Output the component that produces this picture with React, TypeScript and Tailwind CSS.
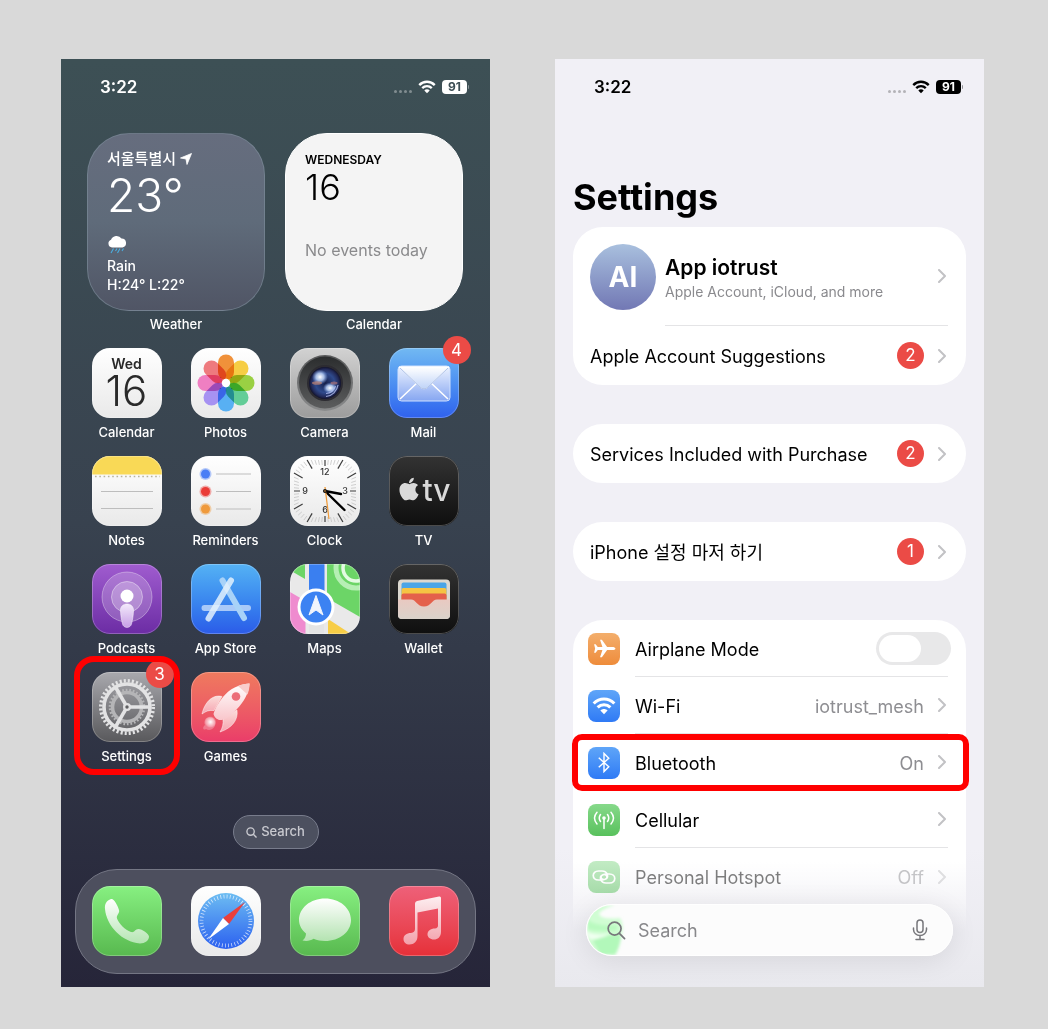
import type { ReactNode } from "react";
import { FaApple } from "react-icons/fa";

const sans = "font-['Inter','Noto_Sans_CJK_KR',sans-serif]";

function WifiGlyph({ className }: { className: string }) {
  return (
    <svg viewBox="0 0 20 15" className={className} fill="none" stroke="currentColor" strokeWidth="2.6">
      <path d="M1.4 5.4C6.2 0.4 13.8 0.4 18.6 5.4" />
      <path d="M4.7 8.7C7.7 5.7 12.3 5.7 15.3 8.7" />
      <path d="M7 11.3C8.7 9.6 11.3 9.6 13 11.3L10 14.4Z" fill="currentColor" stroke="none" />
    </svg>
  );
}

function StatusBar({ dark }: { dark: boolean }) {
  return (
    <div className={`flex h-14 items-center justify-between pr-[21px] pl-[39px] ${dark ? "text-white" : "text-black"}`}>
      <span className="text-[17px] leading-5 font-semibold">3:22</span>
      <div className="flex items-center gap-1.5">
        <div className={`flex gap-0.5 pt-2 ${dark ? "opacity-35" : "opacity-25"}`}>
          {[0, 1, 2, 3].map((i) => (
            <span key={i} className="size-[3px] rounded-full bg-current" />
          ))}
        </div>
        <WifiGlyph className="h-[14px] w-[18px]" />
        <div className="flex items-center gap-px">
          <span
            className={`flex h-[14px] w-[25px] items-center justify-center rounded-[4px] text-[12px] leading-none font-bold ${
              dark ? "bg-white text-[#3d4e55]" : "bg-black text-white"
            }`}
          >
            91
          </span>
          <span className="h-1 w-px rounded-r bg-current opacity-40" />
        </div>
      </div>
    </div>
  );
}

function Badge({ children, className = "" }: { children: ReactNode; className?: string }) {
  return (
    <span
      className={`flex items-center justify-center rounded-full bg-[#eb4b46] text-[17px] leading-none text-white ${className}`}
    >
      {children}
    </span>
  );
}

function Def({ id, from, to }: { id: string; from: string; to: string }) {
  return (
    <linearGradient id={id} x1="0" y1="0" x2="0" y2="1">
      <stop offset="0" stopColor={from} />
      <stop offset="1" stopColor={to} />
    </linearGradient>
  );
}

function Art({ children }: { children: ReactNode }) {
  return (
    <svg viewBox="0 0 70 70" className="size-full" fill="none" aria-hidden="true">
      {children}
    </svg>
  );
}

const petals = ["#f0913a", "#f6cd44", "#9ad043", "#63cd97", "#58b0f3", "#a692f2", "#ef7fc2", "#ee7a7e"];

function PhotosArt() {
  return (
    <Art>
      <g className="isolate">
        {petals.map((c, i) => (
          <rect
            key={c}
            x="27"
            y="6.5"
            width="16"
            height="25.5"
            rx="8"
            fill={c}
            transform={`rotate(${i * 45} 35 35)`}
            className="mix-blend-multiply"
          />
        ))}
      </g>
      <circle cx="35" cy="35" r="4.2" fill="#fff" />
    </Art>
  );
}

function CameraArt() {
  return (
    <Art>
      <defs>
        <Def id="camRing" from="#58595a" to="#8a8b8c" />
        <Def id="camBody" from="#2b2d2e" to="#5c5d5e" />
        <radialGradient id="camLens">
          <stop offset="0" stopColor="#16204a" />
          <stop offset="0.6" stopColor="#2f4a8c" />
          <stop offset="0.85" stopColor="#232c5c" />
          <stop offset="1" stopColor="#12132c" />
        </radialGradient>
        <radialGradient id="camGlare">
          <stop offset="0" stopColor="#fff" />
          <stop offset="0.5" stopColor="#bcd2f6" stopOpacity="0.85" />
          <stop offset="1" stopColor="#7ea2e6" stopOpacity="0" />
        </radialGradient>
      </defs>
      <circle cx="35" cy="35" r="28" fill="url(#camRing)" />
      <circle cx="35" cy="34.5" r="26" fill="url(#camBody)" />
      <circle cx="35" cy="35" r="18" fill="#2c2b31" />
      <circle cx="35" cy="35" r="16" fill="url(#camLens)" />
      <ellipse cx="30" cy="29" rx="8" ry="7.500" fill="url(#camGlare)" />
      <ellipse cx="27" cy="35" rx="5" ry="1.800" fill="#e0916f" opacity="0.6" />
      <ellipse cx="40" cy="40" rx="7" ry="5.500" fill="url(#camGlare)" />
      <ellipse cx="44" cy="35" rx="3.500" ry="1.500" fill="#c07a76" opacity="0.6" />
      <path d="M36 48.500A13.500 13.500 0 0 0 48 37M36 45.500A11 11 0 0 0 45.500 38" stroke="#b5c2f2" strokeWidth="1.200" opacity="0.8" />
    </Art>
  );
}

function MailArt() {
  return (
    <Art>
      <defs>
        <Def id="mailBody" from="#eef4ff" to="#86a6f1" />
        <Def id="mailFlap" from="#ffffff" to="#bfd3f8" />
      </defs>
      <rect x="9" y="18" width="52" height="35" rx="3.5" fill="url(#mailBody)" stroke="#cfe0ff" />
      <path d="M11 51L29 34M59 51L41 34" stroke="#fff" strokeWidth="1.5" />
      <path d="M10 19H60L39 39Q35 42.500 31 39Z" fill="url(#mailFlap)" stroke="#fff" />
      <path d="M11 20L31 39Q35 42.500 39 39L59 20" stroke="#9bb3df" strokeWidth="0.8" />
    </Art>
  );
}

function NotesArt() {
  return (
    <Art>
      <rect width="70" height="18.500" fill="#f9d956" />
      <path d="M3 20.500H68" stroke="#b9b49a" strokeWidth="1.600" strokeDasharray="1.600 2.700" />
      <path d="M9 35.500H61M9 52.500H61" stroke="#bdbdbd" strokeWidth="1.200" />
    </Art>
  );
}

function RemindersArt() {
  return (
    <Art>
      {[
        [18, "#4a7ef5"],
        [35.5, "#ea3b36"],
        [53, "#ef9a3c"],
      ].map(([y, c]) => (
        <g key={c}>
          <circle cx="14.5" cy={y} r="6" fill={c as string} opacity="0.4" />
          <circle cx="14.5" cy={y} r="4.5" fill={c as string} />
          <path d={`M25 ${y}H60`} stroke="#bdbdbd" strokeWidth="1.200" />
        </g>
      ))}
    </Art>
  );
}

function ClockArt() {
  return (
    <Art>
      {Array.from({ length: 60 }, (_, i) => {
        const a = (i * Math.PI) / 30;
        const edge = Math.min(31 / Math.max(Math.abs(Math.sin(a)), Math.abs(Math.cos(a))), 36);
        const len = i % 5 === 0 ? (i % 15 === 0 ? 6 : 10) : 5;
        return (
          <path
            key={i}
            d={`M${35 + edge * Math.sin(a)} ${35 - edge * Math.cos(a)}L${35 + (edge - len) * Math.sin(a)} ${35 - (edge - len) * Math.cos(a)}`}
            stroke={i % 5 === 0 ? "#3c3c3c" : "#c4c4c4"}
            strokeWidth={i % 5 === 0 ? 1.2 : 0.8}
          />
        );
      })}
      <g fill="#333" fontSize="9" textAnchor="middle" fontFamily="Inter, sans-serif" fontWeight="500">
        <text x="35" y="19">12</text>
        <text x="55" y="38">3</text>
        <text x="35" y="57">6</text>
        <text x="15" y="38">9</text>
      </g>
      <path d="M35 35L51 38" stroke="#000" strokeWidth="2.400" strokeLinecap="round" />
      <path d="M35 35L54.500 54" stroke="#000" strokeWidth="2.400" strokeLinecap="round" />
      <path d="M35 31L39 63" stroke="#f09a37" strokeWidth="1.200" />
      <circle cx="35" cy="35" r="2" fill="#111" />
      <circle cx="35" cy="35" r="0.8" fill="#f09a37" />
    </Art>
  );
}

function TvArt() {
  return (
    <div className="flex size-full items-center justify-center text-[#d9d9d9]">
      <FaApple className="mb-1 size-[26px]" />
      <span className="pb-0.5 text-[30px] leading-none font-medium">tv</span>
    </div>
  );
}

function PodcastsArt() {
  return (
    <Art>
      <defs>
        <Def id="podBody" from="#f3e9fb" to="#c79fe6" />
      </defs>
      <circle cx="35" cy="33" r="25" fill="#fff" fillOpacity="0.2" stroke="#fff" strokeOpacity="0.35" />
      <circle cx="35" cy="33" r="15.500" fill="#fff" fillOpacity="0.25" stroke="#fff" strokeOpacity="0.4" />
      <path d="M28.500 46C28.500 38 41.500 38 41.500 46C41.500 51 40.500 56 39.500 60C38.500 64.500 31.500 64.500 30.500 60C29.500 56 28.500 51 28.500 46Z" fill="url(#podBody)" stroke="#fff" strokeOpacity="0.6" strokeWidth="0.8" />
      <circle cx="35" cy="32" r="6.500" fill="#fff" />
    </Art>
  );
}

function AppStoreArt() {
  return (
    <Art>
      <g strokeLinecap="round" strokeWidth="6">
        <path d="M13.500 44H57" stroke="#a9c9f8" />
        <path d="M31.500 16.500L53 54" stroke="#a8d2f8" />
        <path d="M40 16.500L17.500 54.500" stroke="#e3f1fd" strokeOpacity="0.85" />
      </g>
    </Art>
  );
}

function MapsArt() {
  return (
    <Art>
      <defs>
        <clipPath id="mapPark">
          <path d="M37 0H70V53L37 34Z" />
        </clipPath>
      </defs>
      <path d="M10 0H15V15L3 8Z" fill="#6cd567" />
      <rect x="19" width="15.500" height="42" fill="#3a7ff0" />
      <g clipPath="url(#mapPark)">
        <rect width="70" height="70" fill="#6cd567" />
        <circle cx="66" cy="4" r="20" stroke="#b6efb4" strokeWidth="5" />
        <circle cx="66" cy="4" r="13" stroke="#e4fbe3" strokeWidth="3.500" />
      </g>
      <path d="M0 28L15.500 37V70H0Z" fill="#ef8bcf" />
      <path d="M38 55L61 70H38Z" fill="#f7cd46" />
      <rect x="19" y="55" width="15" height="15" fill="#e4e4e4" />
      <circle cx="26" cy="43" r="18.500" fill="#fff" />
      <circle cx="26" cy="43" r="15.500" fill="#3c82f2" />
      <path d="M26 31.500L33 51L26 46L19 51Z" fill="#f0f4fc" stroke="#f0f4fc" strokeLinejoin="round" />
    </Art>
  );
}

function WalletArt() {
  return (
    <Art>
      <defs>
        <Def id="walletPocket" from="#e9c9c1" to="#d9d2ca" />
      </defs>
      <rect x="9" y="15.500" width="52" height="39.500" rx="4" fill="#dcd8cf" />
      <rect x="12.500" y="18.500" width="45" height="20" rx="2" fill="#4aa5e6" />
      <rect x="12.500" y="24" width="45" height="20" rx="2" fill="#f5c443" />
      <rect x="12.500" y="29.500" width="45" height="20" rx="2" fill="#e4604b" />
      <path d="M9 35.500H22C27 35.500 28 42.500 35 42.500S43 35.500 48 35.500H61V51Q61 55 57 55H13Q9 55 9 51Z" fill="url(#walletPocket)" />
    </Art>
  );
}

function SettingsArt() {
  return (
    <Art>
      <circle cx="35" cy="35" r="14.500" stroke="#b5b5b7" strokeWidth="3.600" />
      <circle cx="35" cy="35" r="17" stroke="#b5b5b7" strokeWidth="2.600" strokeDasharray="1.700 1.860" />
      <circle cx="35" cy="35" r="23" stroke="#e3e3e4" strokeWidth="3.600" />
      <circle cx="35" cy="35" r="26.200" stroke="#e3e3e4" strokeWidth="3.600" strokeDasharray="2.100 2.016" />
      <g stroke="#e3e3e4" strokeWidth="3.600">
        <path d="M38 35H57" />
        <path d="M33.500 32.400L24 16" />
        <path d="M33.500 37.600L24 54" />
      </g>
      <circle cx="35" cy="35" r="4" fill="#e3e3e4" />
      <circle cx="35" cy="35" r="1.700" fill="#606063" />
    </Art>
  );
}

function GamesArt() {
  return (
    <Art>
      <defs>
        <Def id="rocket" from="#ffffff" to="#f9c6cb" />
        <Def id="fin" from="#fbdcd9" to="#f6a3b0" />
        <radialGradient id="flame">
          <stop offset="0" stopColor="#fff" />
          <stop offset="1" stopColor="#fff" stopOpacity="0.15" />
        </radialGradient>
      </defs>
      <path d="M31 24.500C21 22 13.500 31 11 42C15 39 18 38 23 38.500Z" fill="url(#fin)" stroke="#fff" strokeOpacity="0.6" strokeWidth="0.800" />
      <path d="M46 38C47.500 48 41 56 29 60C31.500 56 32.500 52 32 47Z" fill="url(#fin)" stroke="#fff" strokeOpacity="0.6" strokeWidth="0.800" />
      <path d="M58.500 11.500C48 12 38.500 17 32 25C27 31 24 36.500 22.500 42C23.500 46 27 48.500 31 48C37 46 42 42 46 37C53 29.500 58 21 58.500 11.500Z" fill="url(#rocket)" />
      <path d="M47 14L56.500 22.500C58 18.500 58.500 15 58.500 11.500C54.500 11.700 50.500 12.500 47 14Z" fill="#f9cdcb" />
      <circle cx="45" cy="24.500" r="4.300" fill="#ec6d78" />
      <path d="M22 46C15 43 12 49 14 53C11 55 12 59 15 57C19 60 26 56 24 49Z" fill="#fff" opacity="0.25" />
      <circle cx="19.500" cy="50" r="5.500" fill="url(#flame)" />
    </Art>
  );
}

function PhoneArt() {
  return (
    <Art>
      <defs>
        <Def id="handset" from="#ffffff" to="#b5e5b3" />
      </defs>
      <path
        d="M19 13C14.500 14.500 12.500 18 13 23C14.500 40 30 56 48 57.500C53 57.500 57 54.500 57 50.500C57 48 50 43 46.500 43C43 43 42.500 47 39 46C33 44 27 37.500 25 32.500C24 29 28 27.500 27 24C26 20 22 12 19 13Z"
        fill="url(#handset)"
      />
    </Art>
  );
}

function SafariArt() {
  return (
    <Art>
      <defs>
        <Def id="compass" from="#6dbdf2" to="#2b60f0" />
      </defs>
      <circle cx="35" cy="35" r="28" fill="url(#compass)" />
      <circle cx="35" cy="35" r="24.500" stroke="#fff" strokeWidth="3.800" strokeDasharray="0.800 2.406" opacity="0.75" />
      <path d="M54 16L38 38L32 32Z" fill="#ea3f3c" />
      <path d="M17 53.500L32 32L38 38Z" fill="#fff" />
    </Art>
  );
}

function MessagesArt() {
  return (
    <Art>
      <defs>
        <Def id="bubble" from="#ffffff" to="#b4e3b1" />
      </defs>
      <path
        d="M35 12.500C49.500 12.500 61 22 61 34S49.500 55 35 55C31 55 27 54.300 23.500 52.800C20.500 54.800 16.500 55.500 12.500 54.500C15 52.500 16 50 16 47.500C11.500 44 9 39 9 34C9 22 20.500 12.500 35 12.500Z"
        fill="url(#bubble)"
      />
    </Art>
  );
}

function MusicArt() {
  return (
    <Art>
      <defs>
        <linearGradient id="note" x1="0" y1="10" x2="0" y2="59" gradientUnits="userSpaceOnUse">
          <stop offset="0" stopColor="#fdeff1" />
          <stop offset="1" stopColor="#f3a0aa" />
        </linearGradient>
      </defs>
      <path
        d="M26 17.500Q26 15.500 28 15L50 10.500Q52 10 52 12V46C52 51 48.500 53.500 45 53.500C41 53.500 38.500 51 38.500 48.500C38.500 45 41.500 42.500 46 42.500Q49 42 49 39.500V22.500L28.500 26.500V50C28.500 55.500 25 58.500 20.500 58.500C17 58.500 14.500 56.500 14.500 53C14.500 49.500 17.500 47 22 47Q26 46.500 26 43Z"
        fill="url(#note)"
      />
    </Art>
  );
}

function CalendarArt() {
  return (
    <div className="flex size-full flex-col items-center pt-2 text-[#2a2a2a]">
      <span className="text-[14px] leading-4 font-semibold">Wed</span>
      <span className="text-[42px] leading-[38px] font-light">16</span>
    </div>
  );
}

type AppItem = { name: string; bg: string; art: ReactNode; badge?: string; highlight?: boolean };

const whiteBg = "bg-linear-to-b from-white to-[#e9e9e9]";
const blackBg = "bg-linear-to-b from-[#333333] to-[#0f0f0f]";
const greenBg = "bg-linear-to-b from-[#87f081] to-[#58b94f]";

const apps: AppItem[] = [
  { name: "Calendar", bg: whiteBg, art: <CalendarArt /> },
  { name: "Photos", bg: whiteBg, art: <PhotosArt /> },
  { name: "Camera", bg: "bg-linear-to-b from-[#d2d2d2] to-[#9c9c9c]", art: <CameraArt /> },
  { name: "Mail", bg: "bg-linear-to-b from-[#72b9f2] to-[#3061ee]", art: <MailArt />, badge: "4" },
  { name: "Notes", bg: whiteBg, art: <NotesArt /> },
  { name: "Reminders", bg: whiteBg, art: <RemindersArt /> },
  { name: "Clock", bg: whiteBg, art: <ClockArt /> },
  { name: "TV", bg: blackBg, art: <TvArt /> },
  { name: "Podcasts", bg: "bg-linear-to-b from-[#a05ccf] to-[#6c2ca4]", art: <PodcastsArt /> },
  { name: "App Store", bg: "bg-linear-to-b from-[#55b2f4] to-[#2c5be8]", art: <AppStoreArt /> },
  { name: "Maps", bg: "bg-[#e9e9e9]", art: <MapsArt /> },
  { name: "Wallet", bg: blackBg, art: <WalletArt /> },
  { name: "Settings", bg: "bg-linear-to-b from-[#a9a9ae] to-[#59595c]", art: <SettingsArt />, badge: "3", highlight: true },
  { name: "Games", bg: "bg-linear-to-b from-[#ef7a5e] to-[#ea3c69]", art: <GamesArt /> },
];

const dock: AppItem[] = [
  { name: "Phone", bg: greenBg, art: <PhoneArt /> },
  { name: "Safari", bg: whiteBg, art: <SafariArt /> },
  { name: "Messages", bg: greenBg, art: <MessagesArt /> },
  { name: "Music", bg: "bg-linear-to-b from-[#ee6079] to-[#e62f38]", art: <MusicArt /> },
];

function IconTile({ app }: { app: AppItem }) {
  return (
    <span className={`relative block size-[70px] overflow-hidden rounded-[18px] ${app.bg}`}>
      {app.art}
      <span className="absolute inset-0 rounded-[18px] border border-white/25" />
    </span>
  );
}

function HomeScreen() {
  return (
    <section
      aria-label="Home screen"
      className="flex min-w-0 flex-1 flex-col bg-linear-to-b from-[#3d5055] via-[#38424f] to-[#262539] pb-[13px]"
    >
      <StatusBar dark />
      <div className="grid grid-cols-4 gap-y-4 pt-[18px] pr-[17px] pl-4">
        <div className="col-span-2 flex flex-col items-center gap-[5px]">
          <div className="flex h-[178px] w-[178px] flex-col rounded-[42px] border border-[#7f8f9c]/60 bg-linear-to-b from-[#666d7e] via-[#5f6b7a] to-[#505565] pt-3.5 pl-[19px] text-white">
            <div className="flex items-center gap-1 text-[15px] leading-[22px] font-medium">
              서울특별시
              <svg viewBox="0 0 12 12" className="size-3" aria-hidden="true">
                <path d="M11.500 0.500L7 11.500L6 6L0.500 5Z" fill="#fff" stroke="#fff" strokeLinejoin="round" strokeWidth="0.800" />
              </svg>
            </div>
            <div className="text-[46px] leading-[50px] font-light">23°</div>
            <svg viewBox="0 0 20 20" className="mt-3.5 size-5" aria-hidden="true">
              <path d="M5 13.500A4 4 0 0 1 4 5.800A6 6 0 0 1 14.500 4.600A4.500 4.500 0 0 1 15.500 13.500Z" fill="#fff" />
              <path d="M6.500 14.500L4 19M10 14.500L8.500 17M13 14.500L10.500 19M16.500 14.500L15 17" stroke="#4aaee0" strokeWidth="1.100" />
            </svg>
            <div className="mt-0.5 text-[14px] leading-[19px] font-medium">
              Rain
              <br />
              H:24° L:22°
            </div>
          </div>
          <span className="text-[13px] leading-4 font-medium text-white">Weather</span>
        </div>
        <div className="col-span-2 flex flex-col items-center gap-[5px]">
          <div className="flex h-[178px] w-[178px] flex-col rounded-[42px] border border-white bg-[#f4f4f4] pt-[18px] pl-[19px] text-black">
            <span className="text-[12px] leading-4 font-semibold">WEDNESDAY</span>
            <span className="text-[36px] leading-[38px] font-light">16</span>
            <span className="mt-[34px] text-[16px] leading-5 text-[#8a8a8c]">No events today</span>
          </div>
          <span className="text-[13px] leading-4 font-medium text-white">Calendar</span>
        </div>
        {apps.map((app) => (
          <button key={app.name} type="button" className="relative flex flex-col items-center gap-1.5 justify-self-center">
            <IconTile app={app} />
            <span className="text-[13px] leading-4 font-medium text-white">{app.name}</span>
            {app.badge && <Badge className="absolute -top-3 -right-3 size-7">{app.badge}</Badge>}
            {app.highlight && (
              <span className="absolute -inset-x-[18px] -top-4 -bottom-[11px] rounded-[20px] border-6 border-[#ff0000]" />
            )}
          </button>
        ))}
      </div>
      <button
        type="button"
        className="mt-[51px] flex h-[34px] w-[86px] items-center justify-center gap-1 self-center rounded-full border border-[#787c8c] bg-[#4c505f] text-[13px] font-medium text-[#c9cad0]"
      >
        <svg viewBox="0 0 12 12" className="size-[11px]" fill="none" stroke="currentColor" strokeWidth="1.500" aria-hidden="true">
          <circle cx="5" cy="5" r="4" />
          <path d="M8 8L11.500 11.500" />
        </svg>
        Search
      </button>
      <nav
        aria-label="Dock"
        className="mx-[14px] mt-5 grid grid-cols-4 justify-items-center rounded-[42px] border border-[#747684] bg-[#4d4f5e] px-0.5 pt-4 pb-[17px]"
      >
        {dock.map((app) => (
          <button key={app.name} type="button" aria-label={app.name}>
            <IconTile app={app} />
          </button>
        ))}
      </nav>
    </section>
  );
}

function Chevron() {
  return (
    <svg viewBox="0 0 8 14" className="mr-0.5 h-3.5 w-2 shrink-0" fill="none" stroke="#c2c2c5" strokeWidth="2" aria-hidden="true">
      <path d="M1 1L7 7L1 13" strokeLinecap="round" strokeLinejoin="round" />
    </svg>
  );
}

function SimpleRow({ label, count }: { label: string; count: string }) {
  return (
    <a href="#" className="flex h-[59px] items-center pr-[18px] pl-[17px]">
      <span className="flex-1 pt-0.5 text-[18px] leading-6">{label}</span>
      <Badge className="size-[27px]">{count}</Badge>
      <span className="w-3.5" />
      <Chevron />
    </a>
  );
}

function SettingRow({
  icon,
  tint,
  label,
  value,
  last,
  highlight,
}: {
  icon: ReactNode;
  tint: string;
  label: string;
  value?: string;
  last?: boolean;
  highlight?: boolean;
}) {
  return (
    <a href="#" className={`relative flex h-[57px] items-center gap-[15px] pr-[18px] pl-[15px] ${last ? "opacity-50" : ""}`}>
      <span className={`flex size-8 items-center justify-center rounded-lg text-white ${tint}`}>{icon}</span>
      <span className={`flex h-full flex-1 items-center gap-3.5 ${last ? "" : "border-b border-[#e4e4e6]"}`}>
        <span className="flex-1 pt-0.5 text-[18px]">{label}</span>
        {value && <span className="pt-0.5 text-[18px] text-[#8e8e92]">{value}</span>}
        <Chevron />
      </span>
      {highlight && <span className="absolute inset-y-0 -right-[3px] -left-px rounded-[10px] border-6 border-[#ff0000]" />}
    </a>
  );
}

const blueTint = "bg-linear-to-b from-[#5fa5f8] to-[#2f7af5]";
const greenTint = "bg-linear-to-b from-[#86d98a] to-[#58c15c]";

function SettingsScreen() {
  return (
    <section aria-label="Settings" className="flex min-w-0 flex-1 flex-col bg-[#f1f0f6] bg-linear-to-b from-[#f1f0f6] from-85% to-[#e9e9ee] pb-[31px] text-black">
      <StatusBar dark={false} />
      <div className="flex flex-col px-[18px] pt-[60px]">
        <h1 className="text-[36px] leading-[44px] font-bold">Settings</h1>
        <div className="mt-2 rounded-[30px] bg-white">
          <a href="#" className="flex h-[99px] items-center gap-[9px] pr-[18px] pl-[17px]">
            <span className="flex size-[66px] items-center justify-center rounded-full bg-linear-to-b from-[#a9c0de] to-[#7278b4] text-[28px] font-bold text-white">
              AI
            </span>
            <span className="flex h-full flex-1 items-center border-b border-[#e4e4e6]">
              <span className="flex flex-1 flex-col pt-[3px]">
                <span className="text-[21px] leading-7 font-semibold">App iotrust</span>
                <span className="text-[14px] leading-5 text-[#8a8a8e]">Apple Account, iCloud, and more</span>
              </span>
              <Chevron />
            </span>
          </a>
          <SimpleRow label="Apple Account Suggestions" count="2" />
        </div>
        <div className="mt-[39px] rounded-[30px] bg-white">
          <SimpleRow label="Services Included with Purchase" count="2" />
        </div>
        <div className="mt-[39px] rounded-[30px] bg-white">
          <SimpleRow label="iPhone 설정 마저 하기" count="1" />
        </div>
        <div className="mt-[39px] rounded-t-[30px] bg-linear-to-b from-white from-78% to-white/0 pb-[25px]">
          <label className="flex h-[57px] items-center gap-[15px] pr-[18px] pl-[15px]">
            <span className="flex size-8 items-center justify-center rounded-lg bg-linear-to-b from-[#f3ae6b] to-[#ee8c3a] text-white">
              <svg viewBox="0 0 24 24" className="size-[25px]" fill="currentColor" aria-hidden="true">
                <path d="M22.500 12C22.500 11 21 10.500 19.500 10.500H14.500L9.500 3.500H7.700L10 10.500H5.500L3.500 8H2L3 12L2 16H3.500L5.500 13.500H10L7.700 20.500H9.500L14.500 13.500H19.500C21 13.500 22.500 13 22.500 12Z" />
              </svg>
            </span>
            <span className="flex h-full flex-1 items-center border-b border-[#e4e4e6]">
              <span className="flex-1 pt-0.5 text-[18px]">Airplane Mode</span>
              <input
                type="checkbox"
                role="switch"
                className="-mr-[3px] flex h-[33px] w-[75px] appearance-none items-center rounded-full bg-[#e8e8e9] px-[3px] before:h-[27px] before:w-[42px] before:rounded-full before:bg-white before:content-['']"
              />
            </span>
          </label>
          <SettingRow icon={<WifiGlyph className="h-[18px] w-6" />} tint={blueTint} label="Wi-Fi" value="iotrust_mesh" />
          <SettingRow
            tint={blueTint}
            label="Bluetooth"
            value="On"
            highlight
            icon={
              <svg viewBox="0 0 14 22" className="h-[21px] w-[14px]" fill="none" stroke="currentColor" strokeWidth="1.500" aria-hidden="true">
                <path d="M1.500 6L12 15.500L7 20.500V1.500L12 6.500L1.500 16" />
              </svg>
            }
          />
          <SettingRow
            tint={greenTint}
            label="Cellular"
            icon={
              <svg viewBox="0 0 22 20" className="h-5 w-[22px]" fill="none" stroke="currentColor" strokeWidth="1.500" strokeLinecap="round" aria-hidden="true">
                <circle cx="11" cy="8" r="1.800" fill="currentColor" stroke="none" />
                <path d="M11 8V18.500M7.500 4.500Q5 8 7.500 11.500M14.500 4.500Q17 8 14.500 11.500M4 2.200Q-1 8 4 14M18 2.200Q23 8 18 14" />
              </svg>
            }
          />
          <SettingRow
            tint={greenTint}
            label="Personal Hotspot"
            value="Off"
            last
            icon={
              <svg viewBox="0 0 24 16" className="h-4 w-6" fill="none" stroke="currentColor" strokeWidth="1.700" strokeLinecap="round" aria-hidden="true">
                <path d="M10.500 11H6.500C-0.500 11 -0.500 2 6.500 2H10C15.500 2 17.500 8.500 13 10.300C11 11 8.500 10 9 7.500" />
                <path d="M13.500 5H17.500C24.500 5 24.500 14 17.500 14H14C8.500 14 6.500 7.500 11 5.700C13 5 15.500 6 15 8.500" />
              </svg>
            }
          />
        </div>
      </div>
      <label className="relative isolate mx-[31px] -mt-[26px] flex h-[52px] items-center gap-3 rounded-full bg-[#fcfcfc] px-[21px] shadow-[0_4px_28px_rgba(0,0,0,0.09)]">
        <span className="absolute inset-0 -z-10 overflow-hidden rounded-full border border-white">
          <svg viewBox="0 0 44 52" className="h-[52px] w-11" aria-hidden="true">
            <defs>
              <filter id="soften" x="-20%" y="-20%" width="140%" height="140%">
                <feGaussianBlur stdDeviation="1.800" />
              </filter>
            </defs>
            <g filter="url(#soften)">
              <path d="M0 0H28Q14 4 12 9Q14 15 33 13Q37 20 35 28Q33 42 28 50H0Z" fill="#d0fdd3" />
              <path d="M0 14Q8 22 30 20V25Q12 28 0 24Z" fill="#b9fabf" />
              <path d="M6 36Q20 28 34 30Q33 42 28 50H14Z" fill="#b2f8ba" />
              <path d="M0 27Q12 32 24 28Q14 35 2 34Z" fill="#f0fff1" />
            </g>
          </svg>
        </span>
        <svg viewBox="0 0 20 20" className="size-[19px] shrink-0 text-[#77777b]" fill="none" stroke="currentColor" strokeWidth="1.800" strokeLinecap="round" aria-hidden="true">
          <circle cx="8" cy="8" r="6.800" />
          <path d="M13 13L18.500 18.500" />
        </svg>
        <input
          type="text"
          aria-label="Search"
          placeholder="Search"
          className="min-w-0 flex-1 bg-transparent text-[18px] outline-none placeholder:text-[#88888b]"
        />
        <svg viewBox="0 0 16 22" className="mr-1 h-[22px] w-4 shrink-0 text-[#77777b]" fill="none" stroke="currentColor" strokeWidth="1.500" strokeLinecap="round" aria-hidden="true">
          <rect x="5" y="1" width="6" height="12.500" rx="3" />
          <path d="M1.500 9V10.500A6.500 6 0 0 0 14.500 10.500V9M8 16.500V20.500M4 20.500H12" />
        </svg>
      </label>
    </section>
  );
}

export default function App() {
  return (
    <main className={`flex gap-[65px] bg-[#d9d9d9] pt-[59px] pr-16 pb-[42px] pl-[61px] ${sans}`}>
      <HomeScreen />
      <SettingsScreen />
    </main>
  );
}
